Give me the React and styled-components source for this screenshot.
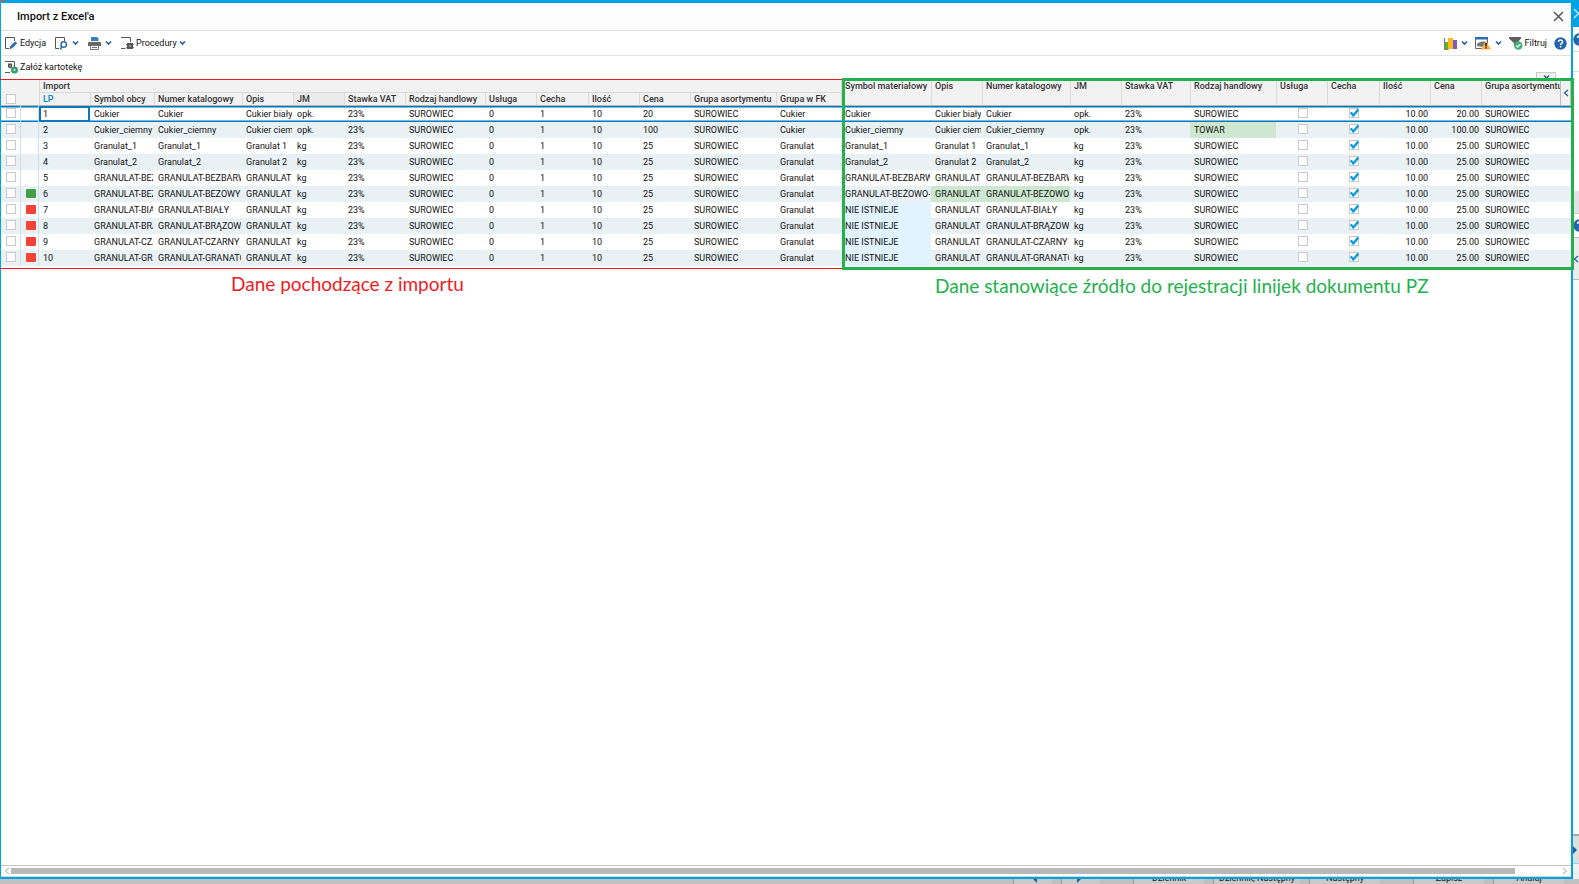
import React from 'react'
import styled, { createGlobalStyle, css } from 'styled-components'

const importColumns = [
  { title: 'LP', width: 51, sorted: true },
  { title: 'Symbol obcy', width: 64 },
  { title: 'Numer katalogowy', width: 88 },
  { title: 'Opis', width: 51 },
  { title: 'JM', width: 51, shaded: true },
  { title: 'Stawka VAT', width: 61 },
  { title: 'Rodzaj handlowy', width: 80 },
  { title: 'Usługa', width: 51 },
  { title: 'Cecha', width: 52 },
  { title: 'Ilość', width: 51 },
  { title: 'Cena', width: 51 },
  { title: 'Grupa asortymentu', width: 86 },
  { title: 'Grupa w FK', width: 65 },
]

const targetColumns = [
  { title: 'Symbol materiałowy', width: 90 },
  { title: 'Opis', width: 51 },
  { title: 'Numer katalogowy', width: 88 },
  { title: 'JM', width: 51 },
  { title: 'Stawka VAT', width: 69 },
  { title: 'Rodzaj handlowy', width: 86 },
  { title: 'Usługa', width: 51 },
  { title: 'Cecha', width: 52 },
  { title: 'Ilość', width: 51 },
  { title: 'Cena', width: 51 },
  { title: 'Grupa asortymentu', width: 86 },
  { title: '', width: 65 },
]

const NONE = 'NIE ISTNIEJE'

const rows = [
  { code: 'Cukier', desc: 'Cukier biały', unit: 'opk.', price: '20', group: 'Cukier', symbol: 'Cukier' },
  { code: 'Cukier_ciemny', desc: 'Cukier ciemny', unit: 'opk.', price: '100', group: 'Cukier', symbol: 'Cukier_ciemny', kind: 'TOWAR' },
  { code: 'Granulat_1', desc: 'Granulat 1', symbol: 'Granulat_1' },
  { code: 'Granulat_2', desc: 'Granulat 2', symbol: 'Granulat_2' },
  { code: 'GRANULAT-BEZBARWNY', desc: 'GRANULAT BEZBARWNY', symbol: 'GRANULAT-BEZBARWNY' },
  { code: 'GRANULAT-BEZOWY', desc: 'GRANULAT BEZOWY', symbol: 'GRANULAT-BEŻOWO-', number: 'GRANULAT-BEZOWO', status: 'changed' },
  { code: 'GRANULAT-BIAŁY', desc: 'GRANULAT BIAŁY', symbol: NONE, status: 'missing' },
  { code: 'GRANULAT-BRĄZOWY', desc: 'GRANULAT BRĄZOWY', symbol: NONE, status: 'missing' },
  { code: 'GRANULAT-CZARNY', desc: 'GRANULAT CZARNY', symbol: NONE, status: 'missing' },
  { code: 'GRANULAT-GRANATOWY', desc: 'GRANULAT GRANATOWY', symbol: NONE, status: 'missing' },
]

const Chevron = () => (
  <svg width="7" height="6" viewBox="0 0 7 6" fill="none" stroke="#2a5f8f" strokeWidth="1.6">
    <path d="M1 1.5 3.5 4 6 1.5" />
  </svg>
)

const EditIcon = () => (
  <svg width="13" height="13" viewBox="0 0 13 13" fill="none">
    <path d="M4 11.5H.5V.5h9V4" stroke="#555" />
    <path d="m10.200 4.200 2 2-4.700 4.800-3 1.300.9-3.200z" fill="#2d6db3" />
  </svg>
)

const PreviewIcon = () => (
  <svg width="13" height="13" viewBox="0 0 13 13" fill="none">
    <path d="M4 11.500H.5V.5h9V4" stroke="#555" />
    <circle cx="8.700" cy="7.500" r="2.700" stroke="#2d6db3" strokeWidth="1.500" />
    <path d="M6.700 9.500 5.500 12.500" stroke="#2d6db3" strokeWidth="1.800" />
  </svg>
)

const PrintIcon = () => (
  <svg width="13" height="13" viewBox="0 0 13 13">
    <path d="M3 0h6l1.500 1.500V4H3z" fill="#3c7dbd" />
    <path d="M1 5h11a1 1 0 0 1 1 1v3H0V6a1 1 0 0 1 1-1z" fill="#666" />
    <path d="M2.500 8.500h8v4h-8z" fill="#fff" stroke="#777" />
    <path d="M4 10.500h5" stroke="#777" />
  </svg>
)

const ProcedureIcon = () => (
  <svg width="13" height="13" viewBox="0 0 13 13" fill="none">
    <path d="M0 .5h9.500V5M0 11.500h4.500" stroke="#555" />
    <path d="M6 6h6v6H6z" fill="#555" />
    <path d="M5.500 7v1M5.500 10v1M12.500 7v1M12.500 10v1" stroke="#888" />
    <path d="M8 8h2v2H8z" fill="#999" />
  </svg>
)

const CreateIcon = () => (
  <svg width="13" height="13" viewBox="0 0 13 13" fill="none">
    <path d="M0 .5h9.500V6M0 11.500h5" stroke="#555" />
    <path d="M3 2.500h4v4L5 7.500 3 6z" fill="#555" />
    <path d="M4.500 4h1.500v1.500H4.500z" fill="#aaa" />
    <circle cx="9.500" cy="9" r="2.300" fill="#dff2e8" stroke="#2f9e68" strokeWidth="2.400" />
  </svg>
)

const ChartIcon = () => (
  <svg width="13" height="13" viewBox="0 0 13 13">
    <path d="M1 5h3v7H1z" fill="#63b32e" />
    <path d="M4 1h5v11H4z" fill="#fdb913" />
    <path d="M9 3h4v9H9z" fill="#7e57c2" />
    <path d="M.5 1v11.500h4" fill="none" stroke="#777" />
  </svg>
)

const AlertIcon = () => (
  <svg width="16" height="14" viewBox="0 0 16 14">
    <path d="M.5 1.500h12v11H.5z" fill="#fff" stroke="#666" />
    <path d="M0 1h13v2.500H0z" fill="#2d6db3" />
    <path d="M2 8c2-2 5-3 9-2v2l-4 3-5-1z" fill="#777" />
    <path d="m11 4.500 5 9H6z" fill="#f9b04a" />
    <path d="M10.200 7h1.600v3.500h-1.600zM10.200 11.200h1.600v1.400h-1.600z" fill="#222" />
  </svg>
)

const FilterIcon = () => (
  <svg width="14" height="13" viewBox="0 0 14 13">
    <path d="M0 0h12v1.500L8 6v5L5 8.500V6L0 1.500z" fill="#5f5f5f" />
    <circle cx="9.300" cy="8.500" r="4.200" fill="#3fae7a" />
    <path d="m7.300 8.500 1.500 1.600 2.700-3" fill="none" stroke="#fff" strokeWidth="1.300" />
  </svg>
)

const HelpIcon = () => (
  <svg width="13" height="13" viewBox="0 0 13 13">
    <circle cx="6.500" cy="6.500" r="6.200" fill="#2365ac" />
    <path d="M4.500 5c0-2.600 4.100-2.600 4.100-.1 0 1.400-2 1.500-2 3.100" fill="none" stroke="#fff" strokeWidth="1.500" />
    <path d="M5.800 9h1.500v1.500H5.800z" fill="#fff" />
  </svg>
)

const CloseIcon = ({ color = '#555' }) => (
  <svg width="11" height="11" viewBox="0 0 11 11" stroke={color} strokeWidth="1.500">
    <path d="m1 1 9 9M10 1 1 10" />
  </svg>
)

const Arrow = ({ back, size = 6, color = '#c4c4c4' }) => (
  <svg width={size} height={size + 2} viewBox="0 0 6 8" fill="none" stroke={color} strokeWidth="1.300">
    <path d={back ? 'M5 1 1.500 4 5 7' : 'M1 1l3.500 3L1 7'} />
  </svg>
)

const HeadCell = ({ col, ...rest }) => (
  <Th scope="col" $sorted={col.sorted} $shaded={col.shaded} {...rest}>
    <Clip>{col.title}</Clip>
  </Th>
)

const Cell = ({ children, ...rest }) => (
  <Td {...rest}>
    <Clip>{children}</Clip>
  </Td>
)

function ImportRow({ row, index }) {
  const { code, desc, unit = 'kg', price = '25', group = 'Granulat' } = row
  const changed = row.status === 'changed'
  return (
    <Tr $active={index === 0}>
      <CheckCell $line>
        <CheckBox aria-label={`Zaznacz wiersz ${index + 1}`} />
      </CheckCell>
      <CheckCell $line $inset>{row.status && <Status $status={row.status} />}</CheckCell>
      <Cell $current={index === 0}>{index + 1}</Cell>
      <Cell>{code}</Cell>
      <Cell>{code}</Cell>
      <Cell>{desc}</Cell>
      <Cell>{unit}</Cell>
      <Cell>23%</Cell>
      <Cell>SUROWIEC</Cell>
      <Cell>0</Cell>
      <Cell>1</Cell>
      <Cell>10</Cell>
      <Cell>{price}</Cell>
      <Cell>SUROWIEC</Cell>
      <Cell>{group}</Cell>
      <Cell $tint={row.symbol === NONE && '#e1f3fe'}>{row.symbol}</Cell>
      <Cell $tint={changed && '#cde8d0'}>{desc}</Cell>
      <Cell $tint={changed && '#cde8d0'}>{row.number || code}</Cell>
      <Cell>{unit}</Cell>
      <Cell>23%</Cell>
      <Cell $tint={row.kind && '#cde8d0'}>{row.kind || 'SUROWIEC'}</Cell>
      <CheckCell $inset>
        <CheckBox aria-label="Usługa" />
      </CheckCell>
      <CheckCell $inset>
        <CheckBox aria-label="Cecha" defaultChecked />
      </CheckCell>
      <Cell $right>10.00</Cell>
      <Cell $right>{price}.00</Cell>
      <Cell>SUROWIEC</Cell>
      <Cell>{group}</Cell>
    </Tr>
  )
}

export default function App() {
  return (
    <Page>
      <GlobalStyle />
      <Dialog>
        <TitleBar>
          <Title>Import z Excel'a</Title>
          <ToolButton aria-label="Zamknij"><CloseIcon /></ToolButton>
        </TitleBar>
        <Toolbar>
          <ToolGroup>
            <ToolButton><EditIcon />Edycja</ToolButton>
            <ToolButton $wide aria-label="Podgląd"><PreviewIcon /><Chevron /></ToolButton>
            <ToolButton $wide aria-label="Drukuj"><PrintIcon /><Chevron /></ToolButton>
            <ToolButton><ProcedureIcon />Procedury<Chevron /></ToolButton>
          </ToolGroup>
          <ToolGroup $tight>
            <ToolButton $wide aria-label="Wykres"><ChartIcon /><Chevron /></ToolButton>
            <ToolButton $wide aria-label="Ostrzeżenia"><AlertIcon /><Chevron /></ToolButton>
            <ToolButton><FilterIcon />Filtruj</ToolButton>
            <ToolButton aria-label="Pomoc"><HelpIcon /></ToolButton>
          </ToolGroup>
        </Toolbar>
        <ActionBar>
          <ToolButton><CreateIcon />Załóż kartotekę</ToolButton>
          <FoldButton aria-label="Rozwiń"><Chevron /></FoldButton>
        </ActionBar>
        <GridArea>
          <TableWrap>
            <Table>
              <colgroup>
                <Col $width={20} />
                <Col $width={18} />
                {[...importColumns, ...targetColumns].map((c, i) => <Col key={i} $width={c.width} />)}
              </colgroup>
              <thead>
                <tr>
                  <Th rowSpan={2}>
                    <HeadCheck><CheckBox aria-label="Zaznacz wszystkie" /></HeadCheck>
                  </Th>
                  <Th rowSpan={2} />
                  <Th colSpan={13} $group $line>Import</Th>
                  {targetColumns.map((c, i) => <HeadCell key={i} col={c} rowSpan={2} $line />)}
                </tr>
                <tr>
                  {importColumns.map((c) => <HeadCell key={c.title} col={c} $line />)}
                </tr>
              </thead>
              <tbody>
                {rows.map((row, i) => <ImportRow key={row.code} row={row} index={i} />)}
              </tbody>
            </Table>
          </TableWrap>
          <SideButton aria-label="Panel boczny"><Arrow back color="#2a5f8f" /></SideButton>
          <ImportMark />
          <TargetMark />
          <ImportNote>Dane pochodzące z importu</ImportNote>
          <TargetNote>Dane stanowiące źródło do rejestracji linijek dokumentu PZ</TargetNote>
        </GridArea>
        <ScrollBar>
          <Arrow back />
          <Track><Thumb /></Track>
          <Arrow />
        </ScrollBar>
      </Dialog>
      <SideStrip>
        <Band $h={27} $bg="#00a3e4"><CloseIcon color="#b5e4f7" /></Band>
        <Band $h={25} $bg="#fcfcfc" $edge="#ddd"><HelpIcon /></Band>
        <Band $h={20} $bg="#fff" $edge="#ddd" />
        <Band $h={119} $bg="#fff" />
        <Band $h={23} $bg="#e2e2e2" $edge="#ccc" />
        <Band $h={24} $bg="#fff" $edge="#bbb"><HelpIcon /></Band>
        <Band $h={42} $bg="#ececec" $edge="#bbb"><Arrow back color="#2a5f8f" /></Band>
        <Band $grow $bg="#fafafa" />
        <Band $h={30} $bg="#dedede" $edge="#8fd3ef" $top><Triangle /></Band>
        <Band $h={15} $bg="#f0f0f0" />
      </SideStrip>
      <BottomStrip>
        <FootButton $w={39} aria-label="Poprzedni"><Triangle $back /></FootButton>
        <FootButton $w={39} $gap aria-label="Kolejny"><Triangle /></FootButton>
        <FootButton $w={71}>Dziennik</FootButton>
        <FootButton $w={87}>Dziennik, Następny</FootButton>
        <FootButton $w={71} $gap>Następny</FootButton>
        <FootButton $w={71}>Zapisz</FootButton>
        <FootButton $w={71}>Anuluj</FootButton>
      </BottomStrip>
    </Page>
  )
}

const GlobalStyle = createGlobalStyle`
*{
  box-sizing: border-box;
}
body{
  margin: 0;
  font-family: Roboto, "Liberation Sans", sans-serif;
  font-size: 9px;
  color: #111;
  overflow: hidden;
}
button{
  font: inherit;
  color: inherit;
  border: 0;
  padding: 0;
  background: none;
}
svg{
  display: block;
  flex: none;
}
`;

const Page = styled.div`
position: relative;
height: 100vh;
display: grid;
grid-template-columns: minmax(0, 1fr) 6px;
grid-template-rows: minmax(0, 1fr) 5px;
background: #c0c0c0;
&::before{
  content: '';
  position: absolute;
  top: 0;
  left: 0;
  width: 5px;
  height: 1px;
  background: #f0512d;
  z-index: 1;
}
`;

const Dialog = styled.main`
display: flex;
flex-direction: column;
min-height: 0;
background: #fff;
border: solid #00a3e4;
border-width: 3px 2px 2px 1px;
`;

const TitleBar = styled.header`
display: flex;
align-items: center;
justify-content: space-between;
height: 28px;
padding: 0 7px 0 16px;
background: #fcfcfc;
border-bottom: 1px solid #e2e2e2;
`;

const Title = styled.h1`
margin: 0;
font-size: 11px;
font-weight: 500;
`;

const Toolbar = styled.div`
display: flex;
align-items: center;
justify-content: space-between;
height: 25px;
padding: 0 4px;
border-bottom: 1px solid #e2e2e2;
`;

const ToolGroup = styled.div`
display: flex;
align-items: center;
gap: ${({ $tight }) => ($tight ? 7 : 9)}px;
`;

const ActionBar = styled(Toolbar)`
align-items: stretch;
height: 24px;
padding-right: 15px;
border-bottom: 0;
`;

const ToolButton = styled.button`
display: flex;
align-items: center;
gap: ${({ $wide }) => ($wide ? 4 : 2)}px;
white-space: nowrap;
${ActionBar} & {
  padding-bottom: 2px;
}
`;

const FoldButton = styled.button`
align-self: flex-end;
display: grid;
place-items: center;
width: 20px;
height: 8px;
background: #f0f0f0;
border: 1px solid #ccc;
border-bottom: 0;
`;

const GridArea = styled.section`
position: relative;
flex: 1;
min-height: 0;
`;

const TableWrap = styled.div`
max-height: 100%;
overflow: hidden;
`;

const Table = styled.table`
table-layout: fixed;
width: 100%;
border-spacing: 0;
white-space: nowrap;
`;

const Col = styled.col`
width: ${({ $width }) => $width}px;
`;

const Clip = styled.div`
overflow: hidden;
`;

const Th = styled.th`
height: 13px;
padding: 1px 2px 0 3px;
background: ${({ $shaded }) => ($shaded ? '#ebebeb' : '#f2f2f2')};
border-left: ${({ $line }) => ($line ? '1px solid #d9d9d9' : 0)};
border-bottom: 1px solid ${({ $group }) => ($group ? '#d9d9d9' : '#b5b5b5')};
color: ${({ $sorted }) => ($sorted ? '#0088cc' : '#333')};
font-weight: 500;
line-height: 11px;
text-align: left;
vertical-align: top;
`;

const HeadCheck = styled.div`
display: flex;
padding: 13px 0 0 2px;
`;

const Tr = styled.tr`
background: #fff;
&:nth-child(even){
  background: #e9f1f5;
}
${({ $active }) => $active && css`
  td{
    box-shadow: inset 0 1px #0b77b8, inset 0 2px #6fbbe2, inset 0 -1px #0b77b8, inset 0 -2px #6fbbe2;
  }
`}
`;

const Td = styled.td`
height: 16px;
padding: 0 ${({ $right }) => ($right ? 2 : 1)}px 0 4px;
line-height: 12px;
text-align: ${({ $right }) => ($right ? 'right' : 'left')};
background: ${({ $tint }) => $tint || 'transparent'};
${({ $current }) => $current && css`
  && {
    box-shadow: inset 0 0 0 2px #0b77b8;
  }
`}
`;

const CheckCell = styled.td`
height: 16px;
padding: 0 0 2px ${({ $inset }) => ($inset ? 2 : 0)}px;
line-height: 0;
text-align: center;
border-right: ${({ $line }) => ($line ? '1px solid #cddfec' : 0)};
`;

const CheckBox = styled.input.attrs({ type: 'checkbox' })`
appearance: none;
position: relative;
width: 10px;
height: 10px;
margin: 0;
background: #fff;
border: 1px solid #c9c9c9;
vertical-align: middle;
&:checked::after{
  content: '';
  position: absolute;
  inset: -1px;
  background: #0a9bdc;
  clip-path: polygon(8% 48%, 28% 38%, 42% 58%, 86% 5%, 100% 25%, 48% 88%, 36% 88%);
}
`;

const Status = styled.span`
display: inline-block;
width: 10px;
height: 9px;
border-radius: 1px;
vertical-align: middle;
background: ${({ $status }) => ($status === 'changed' ? '#43a047' : '#f44336')};
`;

const SideButton = styled.button`
position: absolute;
top: 0;
right: 0;
display: grid;
place-items: center;
width: 11px;
height: 26px;
background: #f2f2f2;
border: 1px solid #bdbdbd;
`;

/* frames drawn over the grid */
const ImportMark = styled.div`
position: absolute;
top: -1px;
left: -1px;
width: 842px;
height: 190px;
border: solid #ed1c24;
border-width: 1px 0;
pointer-events: none;
`;

const TargetMark = styled.div`
position: absolute;
top: -2px;
left: 841px;
right: -3px;
height: 192px;
border: 3px solid #22b14c;
pointer-events: none;
`;

const Note = styled.p`
position: absolute;
margin: 0;
font-family: Lato, "Open Sans", sans-serif;
font-size: 19px;
line-height: 24px;
white-space: nowrap;
`;

const ImportNote = styled(Note)`
top: 192px;
left: 230px;
color: #ed1c24;
`;

const TargetNote = styled(Note)`
top: 194px;
left: 934px;
color: #22b14c;
`;

const ScrollBar = styled.div`
display: flex;
align-items: center;
gap: 1px;
height: 12px;
padding: 0 3px;
border-top: 1px solid #c4c4c4;
border-bottom: 1px solid #d5d5d5;
`;

const Track = styled.div`
flex: 1;
`;

const Thumb = styled.div`
width: 97%;
height: 6px;
background: #b8b8b8;
`;

const SideStrip = styled.aside`
display: flex;
flex-direction: column;
min-height: 0;
overflow: hidden;
`;

const Band = styled.div`
display: flex;
align-items: center;
flex: ${({ $grow }) => ($grow ? 1 : 'none')};
height: ${({ $h }) => ($h ? `${$h}px` : 'auto')};
overflow: hidden;
background: ${({ $bg }) => $bg};
border-bottom: ${({ $edge }) => ($edge ? `1px solid ${$edge}` : 0)};
border-top: ${({ $top }) => ($top ? '2px solid #aaa' : 0)};
`;

const BottomStrip = styled.footer`
grid-column: 1 / -1;
display: flex;
align-items: flex-end;
justify-content: flex-end;
gap: 9px;
padding-right: 15px;
overflow: hidden;
`;

const FootButton = styled.button`
display: flex;
align-items: flex-end;
justify-content: center;
flex: none;
width: ${({ $w }) => $w}px;
height: 14px;
margin-right: ${({ $gap }) => ($gap ? 24 : 0)}px;
padding-bottom: 1px;
background: #c9c9c9;
border-left: 1px solid #999;
white-space: nowrap;
`;

const Triangle = styled.i`
border: 4px solid transparent;
border-left-color: ${({ $back }) => ($back ? 'transparent' : '#1f5f96')};
border-right-color: ${({ $back }) => ($back ? '#1f5f96' : 'transparent')};
`;
